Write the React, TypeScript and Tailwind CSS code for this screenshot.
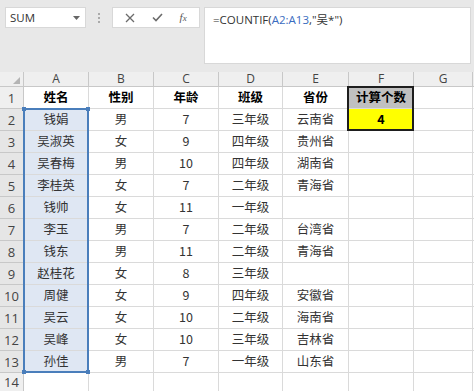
import React from "react";

const cjk = { fontFamily: '"Noto Sans CJK SC", "Noto Sans", sans-serif' };
const ui = { fontFamily: '"Open Sans", "Noto Sans CJK SC", sans-serif' };

const COLS = ["A", "B", "C", "D", "E", "F", "G"];

const ROWS = [
  ["钱娟", "男", "7", "三年级", "云南省"],
  ["吴淑英", "女", "9", "四年级", "贵州省"],
  ["吴春梅", "男", "10", "四年级", "湖南省"],
  ["李桂英", "女", "7", "二年级", "青海省"],
  ["钱帅", "女", "11", "一年级", ""],
  ["李玉", "男", "7", "二年级", "台湾省"],
  ["钱东", "男", "11", "二年级", "青海省"],
  ["赵桂花", "女", "8", "三年级", ""],
  ["周健", "女", "9", "四年级", "安徽省"],
  ["吴云", "女", "10", "二年级", "海南省"],
  ["吴峰", "女", "10", "三年级", "吉林省"],
  ["孙佳", "男", "7", "一年级", "山东省"],
];

function FormulaBar() {
  return (
    <div className="h-[72px] shrink-0 bg-[#e8e8e8] flex items-start pt-[7px] pl-[5px] pr-[3px]">
      {/* name box */}
      <div className="w-[81px] h-[21px] bg-white border border-[#d8d8d8] flex items-center justify-between pl-[4px] pr-[5px]">
        <span className="text-[11.5px] text-[#333]" style={ui}>SUM</span>
        <svg width="7" height="4" viewBox="0 0 7 4"><path d="M0 0h7L3.5 4z" fill="#666" /></svg>
      </div>
      <div className="w-[26px] h-[21px] flex flex-col items-center justify-center gap-[2px]">
        <span className="w-[2px] h-[2px] bg-[#aaa]" />
        <span className="w-[2px] h-[2px] bg-[#aaa]" />
        <span className="w-[2px] h-[2px] bg-[#aaa]" />
      </div>
      {/* cancel / enter / fx */}
      <div className="w-[88px] h-[21px] bg-white border border-[#d8d8d8] flex items-center justify-around px-[4px]">
        <svg width="10" height="10" viewBox="0 0 10 10">
          <path d="M1 1l8 8M9 1l-8 8" stroke="#6b6b6b" strokeWidth="1.3" />
        </svg>
        <svg width="11" height="9" viewBox="0 0 11 9">
          <path d="M1 4.5l3 3L10 1" stroke="#6b6b6b" strokeWidth="1.6" fill="none" />
        </svg>
        <span className="text-[11px] italic text-[#555]" style={{ fontFamily: '"Liberation Serif", serif' }}>
          f<span className="text-[9px]">x</span>
        </span>
      </div>
      <div className="flex-1 ml-[4px] h-[57px] bg-white border border-[#d8d8d8] pl-[8px] leading-[20px]">
        <span className="text-[11.5px] text-[#333]" style={ui}>
          =COUNTIF(<span className="text-[#3a6cc0]">A2:A13</span>,"吴*")
        </span>
      </div>
    </div>
  );
}

export default function App() {
  const gridLine = "border-r border-b border-[#dadada]";
  const headLine = "border-r border-b border-[#c8c8c8]";
  const rowNum = "flex items-center justify-center pt-[3px] text-[13px] text-[#444]";

  return (
    <div className="w-[474px] h-[391px] overflow-hidden bg-white flex flex-col">
      <FormulaBar />

      <div className="relative">
        <div className="grid grid-cols-[24px_65px_65px_65px_64px_66px_65px_59px_1fr] grid-rows-[15px_repeat(13,22px)_18px]">
          {/* corner */}
          <div className={`${headLine} bg-[#efefef] relative`}>
            <svg className="absolute right-[3px] bottom-[2px]" width="7" height="7" viewBox="0 0 7 7">
              <path d="M7 0v7H0z" fill="#b4b4b4" />
            </svg>
          </div>
          {COLS.map((c) => (
            <div
              key={c}
              className={`${headLine} bg-[#efefef] flex items-center justify-center text-[12px] text-[#444]`}
              style={ui}
            >
              {c}
            </div>
          ))}
          <div className="bg-[#efefef] border-b border-[#c8c8c8]" />

          {/* row 1 */}
          <div className={`${headLine} bg-[#efefef] ${rowNum}`} style={ui}>
            1
          </div>
          {["姓名", "性别", "年龄", "班级", "省份"].map((h) => (
            <div key={h} className={`${gridLine} flex items-center justify-center text-[12.5px] font-bold text-black`} style={cjk}>
              {h}
            </div>
          ))}
          <div className="border-r border-b border-[#dadada] bg-[#c0c0c0] flex items-center justify-center text-[12.5px] font-bold text-black" style={cjk}>
            计算个数
          </div>
          <div className={gridLine} />
          <div className="border-b border-[#dadada]" />

          {ROWS.map((r, i) => (
            <React.Fragment key={i}>
              <div className={`${headLine} bg-[#e6e6e6] ${rowNum}`} style={ui}>
                {i + 2}
              </div>
              {r.map((v, j) => (
                <div
                  key={j}
                  className={`${gridLine} ${j === 0 ? "bg-[#dfe7f3]" : ""} flex items-center justify-center text-[12.5px] text-[#333]`}
                  style={cjk}
                >
                  {v}
                </div>
              ))}
              {i === 0 ? (
                <div className="border-r border-b border-[#dadada] bg-[#ffff00] flex items-center justify-center text-[12.5px] font-bold text-black" style={cjk}>
                  4
                </div>
              ) : (
                <div className={gridLine} />
              )}
              <div className={gridLine} />
              <div className="border-b border-[#dadada]" />
            </React.Fragment>
          ))}

          {/* row 14 (partly visible) */}
          <div className="border-r border-[#c8c8c8] bg-[#efefef] flex items-center justify-center text-[13px] leading-[16px] text-[#444]" style={ui}>
            14
          </div>
          {COLS.map((c) => (
            <div key={c} className="border-r border-[#dadada]" />
          ))}
          <div />
        </div>

        {/* selection A2:A13 */}
        <div className="absolute left-[23px] top-[36px] w-[66px] h-[265px] border-2 border-[#4a7ebb] pointer-events-none" />
        <span className="absolute left-[22px] top-[35px] w-[4px] h-[4px] bg-[#4a7ebb]" />
        <span className="absolute left-[86px] top-[35px] w-[4px] h-[4px] bg-[#4a7ebb]" />
        <span className="absolute left-[22px] top-[298px] w-[4px] h-[4px] bg-[#4a7ebb]" />
        <span className="absolute left-[86px] top-[298px] w-[4px] h-[4px] bg-[#4a7ebb]" />

        {/* F1:F2 outline */}
        <div className="absolute left-[347px] top-[14px] w-[67px] h-[45px] border-2 border-[#1e1e1e] pointer-events-none" />
      </div>
    </div>
  );
}
